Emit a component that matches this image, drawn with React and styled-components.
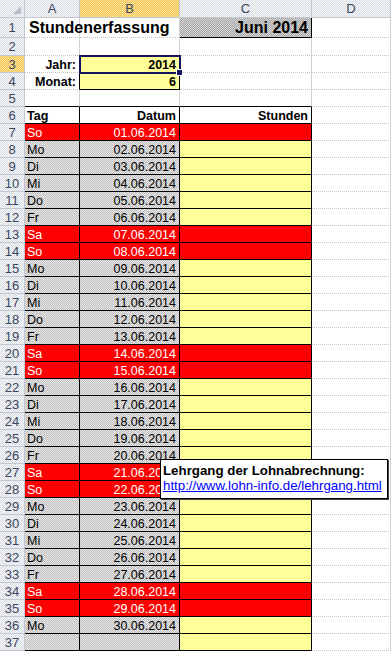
import styled, { createGlobalStyle, css } from "styled-components";

const GlobalStyle = createGlobalStyle`
  html, body { margin: 0; padding: 0; background: #fff; overflow: hidden; }
  body { font-family: "Liberation Sans", Arial, sans-serif; }
`;

const dither = (a, b) => css`
  background-color: ${a};
  background-image: repeating-conic-gradient(${a} 0% 25%, ${b} 0% 50%);
  background-size: 2px 2px;
`;

const fills = {
  white: css`background: #fff;`,
  gray: dither("#bdbdbd", "#e9e9e9"),
  dark: dither("#a4a4a4", "#d8d8d8"),
  red: css`background: #ff0000;`,
  yellow: css`background: #ffff99;`,
};

const Page = styled.div`
  position: relative;
  width: 391px;
  height: 653px;
  overflow: hidden;
`;

const Sheet = styled.div`
  display: grid;
  grid-template-columns: 25px 55px 100px 132px 1fr;
  grid-template-rows: 18px 20px 18px repeat(36, 17px);
`;

const Head = styled.div`
  box-sizing: border-box;
  display: flex;
  align-items: center;
  justify-content: center;
  font-size: 13px;
  color: #3a4660;
  border-right: 1px solid #c3c8d0;
  border-bottom: 1px solid #c3c8d0;
  ${(p) => (p.$active ? dither("#f2c04e", "#fbe6a2") : dither("#d9dde4", "#f6f7f9"))}
`;

const Corner = styled(Head)`
  justify-content: flex-end;
  align-items: flex-end;
  padding: 0 3px 3px 0;
`;

const Cell = styled.div`
  box-sizing: border-box;
  display: flex;
  align-items: center;
  justify-content: ${(p) => (p.$align === "right" ? "flex-end" : "flex-start")};
  padding: 1px 3px 0 2px;
  white-space: nowrap;
  min-width: 0;
  font-size: ${(p) => (p.$big ? "16px" : "12.5px")};
  font-weight: ${(p) => (p.$bold ? 700 : 400)};
  color: ${(p) => (p.$fill === "red" ? "#fff" : "#000")};
  border-right: 1px solid ${(p) => (p.$edgeR ? "#000" : "#d2d2d2")};
  border-bottom: 1px ${(p) => (p.$edgeB ? "solid #000" : "dotted #c2c2c2")};
  ${(p) => fills[p.$fill || "white"]}
  ${(p) =>
    p.$over &&
    css`
      position: relative;
      z-index: 1;
      padding-left: 4px;
    `}
  ${(p) =>
    p.$selected &&
    css`
      position: relative;
      z-index: 2;
      outline: 2px solid #14145c;
      outline-offset: -1px;
      &::after {
        content: "";
        position: absolute;
        right: -4px;
        bottom: -4px;
        width: 5px;
        height: 5px;
        background: #14145c;
        border: 1px solid #fff;
      }
    `}
`;

const Tip = styled.div`
  position: absolute;
  left: 160px;
  top: 459px;
  z-index: 5;
  box-sizing: border-box;
  width: 228px;
  height: 40px;
  padding: 3px 3px 0 2px;
  background: #fff;
  border: 1px solid #000;
  box-shadow: 1px 1px 0 #444;
  font-size: 13.3px;
  line-height: 15px;
`;

const TipTitle = styled.div`
  font-weight: 700;
  color: #000;
`;

const TipLink = styled.a`
  color: #0000ff;
  text-decoration: underline;
`;

const names = ["So", "Mo", "Di", "Mi", "Do", "Fr", "Sa"];
const days = Array.from({ length: 30 }, (_, i) => ({
  day: names[i % 7],
  date: `${String(i + 1).padStart(2, "0")}.06.2014`,
  weekend: i % 7 === 0 || i % 7 === 6,
}));

const RowHead = ({ n, active }) => <Head $active={active}>{n}</Head>;

export default function App() {
  return (
    <Page>
      <GlobalStyle />
      <Sheet>
        <Corner>
          <svg width="8" height="8" viewBox="0 0 8 8">
            <path d="M8 0 L8 8 L0 8 Z" fill="#b8bec8" />
          </svg>
        </Corner>
        <Head>A</Head>
        <Head $active>B</Head>
        <Head>C</Head>
        <Head>D</Head>

        <RowHead n={1} />
        <Cell $bold $big $over>Stundenerfassung</Cell>
        <Cell />
        <Cell $fill="dark" $bold $big $align="right" $edgeR $edgeB>Juni 2014</Cell>
        <Cell />

        <RowHead n={2} />
        <Cell />
        <Cell $edgeB />
        <Cell />
        <Cell />

        <RowHead n={3} active />
        <Cell $bold $align="right" $edgeR>Jahr:</Cell>
        <Cell $fill="yellow" $bold $align="right" $edgeR $edgeB $selected>2014</Cell>
        <Cell />
        <Cell />

        <RowHead n={4} />
        <Cell $bold $align="right" $edgeR>Monat:</Cell>
        <Cell $fill="yellow" $bold $align="right" $edgeR $edgeB>6</Cell>
        <Cell />
        <Cell />

        <RowHead n={5} />
        <Cell $edgeB />
        <Cell $edgeB />
        <Cell $edgeB />
        <Cell />

        <RowHead n={6} />
        <Cell $bold $edgeR $edgeB>Tag</Cell>
        <Cell $bold $align="right" $edgeR $edgeB>Datum</Cell>
        <Cell $bold $align="right" $edgeR $edgeB>Stunden</Cell>
        <Cell />

        {days.map((d, i) => (
          <Row key={d.date} n={i + 7} {...d} />
        ))}

        <RowHead n={37} />
        <Cell $fill="gray" $edgeR $edgeB />
        <Cell $fill="gray" $edgeR $edgeB />
        <Cell $fill="yellow" $edgeR $edgeB />
        <Cell />
      </Sheet>

      <Tip>
        <TipTitle>Lehrgang der Lohnabrechnung:</TipTitle>
        <TipLink href="#">http://www.lohn-info.de/lehrgang.html</TipLink>
      </Tip>
    </Page>
  );
}

function Row({ n, day, date, weekend }) {
  const side = weekend ? "red" : "gray";
  return (
    <>
      <RowHead n={n} />
      <Cell $fill={side} $edgeR $edgeB>{day}</Cell>
      <Cell $fill={side} $align="right" $edgeR $edgeB>{date}</Cell>
      <Cell $fill={weekend ? "red" : "yellow"} $edgeR $edgeB />
      <Cell />
    </>
  );
}
